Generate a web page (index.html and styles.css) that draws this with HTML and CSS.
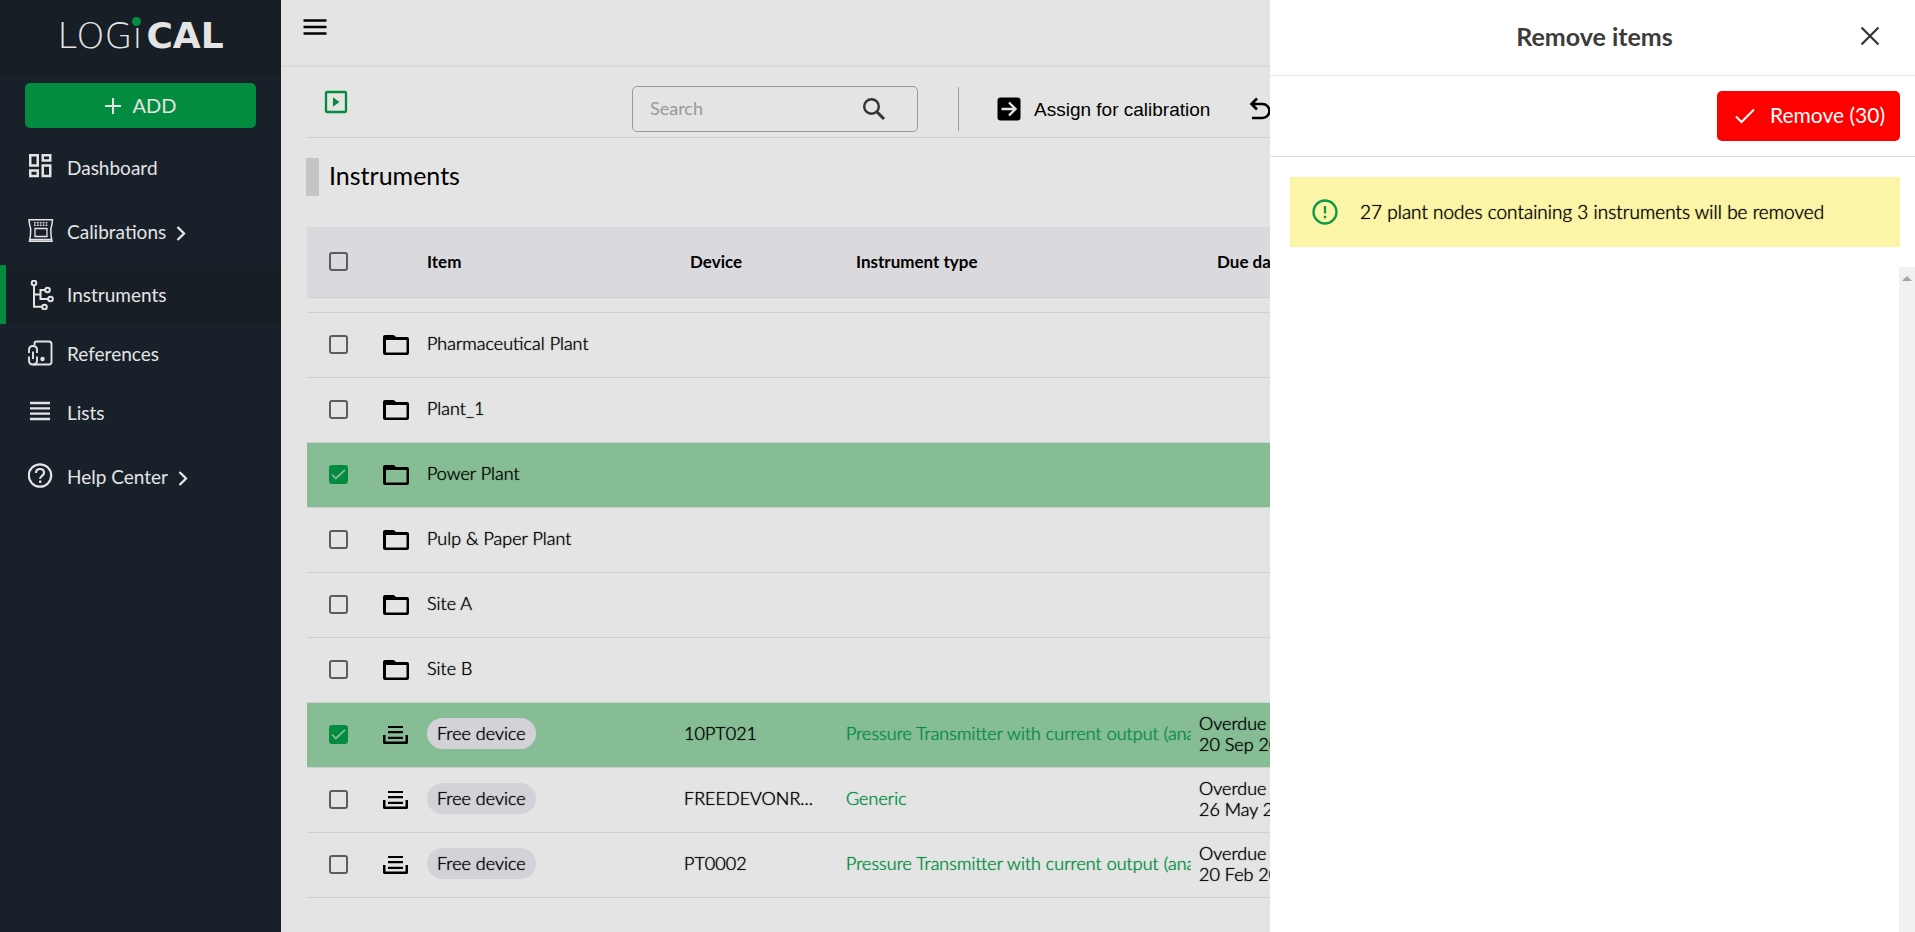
FILE: index.html
```html
<!DOCTYPE html>
<html lang="en">
<head>
<meta charset="utf-8">
<title>LOGiCAL – Instruments</title>
<link rel="stylesheet" href="styles.css">
</head>
<body>
<svg class="sprite" aria-hidden="true">
  <symbol id="folder" viewBox="0 0 26 20">
    <path fill="#000" fill-rule="evenodd" d="M2 0H10Q11 0 12 1L13 2H24Q26 2 26 4V18Q26 20 24 20H2Q0 20 0 18V2Q0 0 2 0ZM3 5V17.500H23.500V5Z"/>
  </symbol>
  <symbol id="device" viewBox="0 0 26 18">
    <path fill="#000" d="M5 0H20V2H5ZM5 5H20V7.300H5ZM5 10.700H20V13H5ZM0 9H2.500V15.500H22.500V9H25V16.500Q25 18 23.500 18H1.500Q0 18 0 16.500Z"/>
  </symbol>
</svg>
<div class="app">
  <aside class="sidebar">
    <div class="brand"><span class="brand-thin">LOG<span class="brand-i">ı</span></span><span class="brand-bold">CAL</span></div>
    <button class="add" type="button">
      <svg width="16" height="16" viewBox="0 0 16 16"><path d="M8 0V16M0 8H16" stroke="currentColor" stroke-width="2"/></svg>
      ADD
    </button>
    <nav class="nav">
      <a class="nav-item" href="#">
        <svg width="26" height="30" viewBox="0 0 26 30" fill="none" stroke="currentColor" stroke-width="2.500"><path d="M2.250 2.250H9.750V12.500H2.250ZM14.750 2.250H22.250V7.500H14.750ZM2.250 17.500H9.750V23H2.250ZM14.750 12.500H22.250V23H14.750Z"/></svg>
        Dashboard
      </a>
      <a class="nav-item expandable" href="#">
        <svg width="26" height="30" viewBox="0 0 26 30" fill="none" stroke="currentColor"><path stroke-width="1.500" d="M1 2.800H24.500L24 7Q22 12 23 18L24 24.300H1.500L2.500 18Q3.500 12 1.500 7ZM2 22.500H23.500"/><path stroke-width="1.300" d="M7 11.500H19V19.500H7Z"/><path stroke-width="1.500" stroke-dasharray="1.700 1.200" d="M6 5.700H19.500M6 8.200H19.500"/></svg>
        Calibrations
        <svg class="chev" width="10" height="15" viewBox="0 0 10 15" fill="none" stroke="currentColor" stroke-width="2.300"><path d="M1.500 1L8 7.500 1.500 14"/></svg>
      </a>
      <a class="nav-item active" href="#">
        <svg width="26" height="30" viewBox="0 0 26 30" fill="none" stroke="currentColor" stroke-width="2"><circle cx="6" cy="3" r="2.300"/><circle cx="19.500" cy="10" r="2.300"/><circle cx="22.500" cy="19" r="2.300"/><circle cx="16.500" cy="27" r="2.300"/><path d="M6 5.500V26.800H14M6 14.500H12.500M17 10H12.500V19H20"/></svg>
        Instruments
      </a>
      <a class="nav-item" href="#">
        <svg width="26" height="30" viewBox="0 0 26 30" fill="none" stroke="currentColor" stroke-width="1.900"><path d="M6.500 6V4.500Q6.500 2.500 8.500 2.500H21Q23.500 2.500 23.500 5V23Q23.500 25.500 21 25.500H5"/><path d="M1 14V11Q1 7 5 7T9 11V14M1 17.500V21.500Q1 25.500 5 25.500T9 21.500V17.500M5 12.500V20"/><circle cx="14.500" cy="20" r="2.200" fill="currentColor" stroke="none"/></svg>
        References
      </a>
      <a class="nav-item" href="#">
        <svg width="26" height="30" viewBox="0 0 26 30" fill="none" stroke="currentColor" stroke-width="2.300"><path d="M2 5H22M2 10.300H22M2 15.600H22M2 21H22"/></svg>
        Lists
      </a>
      <a class="nav-item expandable" href="#">
        <svg width="26" height="30" viewBox="0 0 26 30" fill="none" stroke="currentColor" stroke-width="2.200"><circle cx="12" cy="13.500" r="11.200"/><path d="M8 11Q8 7 12 7T16 10.700Q16 12.300 14 13.800T12.200 16.800M12.200 18.600V21"/></svg>
        Help Center
        <svg class="chev" width="10" height="15" viewBox="0 0 10 15" fill="none" stroke="currentColor" stroke-width="2.300"><path d="M1.500 1L8 7.500 1.500 14"/></svg>
      </a>
    </nav>
  </aside>

  <main class="main">
    <header class="topbar">
      <button class="icon-btn" type="button" aria-label="Toggle menu">
        <svg width="24" height="16" viewBox="0 0 24 16"><path d="M.5 1.500H23.500M.5 8H23.500M.5 14.500H23.500" stroke="#000" stroke-width="2.600"/></svg>
      </button>
    </header>
    <div class="content">
      <div class="toolbar">
        <button class="icon-btn play" type="button" aria-label="Expand tree">
          <svg width="24" height="24" viewBox="0 0 24 24"><rect x="2" y="2" width="20" height="20" rx="1" fill="none" stroke="#038c40" stroke-width="2.300"/><path d="M9 7.200L15.500 12 9 16.800Z" fill="#038c40"/></svg>
        </button>
        <div class="search">
          <input type="text" placeholder="Search" aria-label="Search">
          <svg width="24" height="24" viewBox="0 0 24 24" fill="none" stroke="#333"><circle cx="9.500" cy="9.500" r="7.300" stroke-width="2.400"/><path d="M14.500 14.500L22 22" stroke-width="3"/></svg>
        </div>
        <div class="actions">
          <button class="action" type="button">
            <svg width="24" height="24" viewBox="0 0 24 24"><rect x=".5" y=".5" width="23" height="23" rx="3"/><path d="M4.500 12H18M12 5.500L18.500 12 12 18.500" fill="none" stroke="#e4e4e4" stroke-width="2.400"/></svg>
            Assign for calibration
          </button>
          <button class="action" type="button" aria-label="Undo">
            <svg width="24" height="24" viewBox="0 0 24 24" fill="none" stroke="#000" stroke-width="2.600"><path d="M8 1.500L2.500 7 8 12.500M2.500 7H13.500A7 7 0 0 1 13.500 21H3"/></svg>
          </button>
        </div>
      </div>
      <h1 class="title">Instruments</h1>
      <table class="grid">
        <colgroup><col class="c-check"><col class="c-icon"><col class="c-item"><col class="c-device"><col class="c-type"><col class="c-due"></colgroup>
        <thead>
          <tr><th><input type="checkbox" aria-label="Select all"></th><th></th><th>Item</th><th>Device</th><th>Instrument type</th><th>Due date</th></tr>
        </thead>
        <tbody>
          <tr class="peek"><td colspan="6"></td></tr>
          <tr><td><input type="checkbox" aria-label="Select Pharmaceutical Plant"></td><td><svg class="folder"><use href="#folder"/></svg></td><td>Pharmaceutical Plant</td><td></td><td></td><td></td></tr>
          <tr><td><input type="checkbox" aria-label="Select Plant_1"></td><td><svg class="folder"><use href="#folder"/></svg></td><td>Plant_1</td><td></td><td></td><td></td></tr>
          <tr class="selected"><td><input type="checkbox" checked aria-label="Select Power Plant"></td><td><svg class="folder"><use href="#folder"/></svg></td><td>Power Plant</td><td></td><td></td><td></td></tr>
          <tr><td><input type="checkbox" aria-label="Select Pulp &amp; Paper Plant"></td><td><svg class="folder"><use href="#folder"/></svg></td><td>Pulp &amp; Paper Plant</td><td></td><td></td><td></td></tr>
          <tr><td><input type="checkbox" aria-label="Select Site A"></td><td><svg class="folder"><use href="#folder"/></svg></td><td>Site A</td><td></td><td></td><td></td></tr>
          <tr><td><input type="checkbox" aria-label="Select Site B"></td><td><svg class="folder"><use href="#folder"/></svg></td><td>Site B</td><td></td><td></td><td></td></tr>
          <tr class="selected"><td><input type="checkbox" checked aria-label="Select 10PT021"></td><td><svg class="device"><use href="#device"/></svg></td><td><span class="pill">Free device</span></td><td>10PT021</td><td class="type"><div>Pressure Transmitter with current output (analog)</div></td><td>Overdue<br>20 Sep 2023</td></tr>
          <tr><td><input type="checkbox" aria-label="Select FREEDEVONR"></td><td><svg class="device"><use href="#device"/></svg></td><td><span class="pill">Free device</span></td><td>FREEDEVONR...</td><td class="type"><div>Generic</div></td><td>Overdue<br>26 May 2023</td></tr>
          <tr><td><input type="checkbox" aria-label="Select PT0002"></td><td><svg class="device"><use href="#device"/></svg></td><td><span class="pill">Free device</span></td><td>PT0002</td><td class="type"><div>Pressure Transmitter with current output (analog)</div></td><td>Overdue<br>20 Feb 2023</td></tr>
        </tbody>
      </table>
    </div>
  </main>
</div>

<section class="drawer" role="dialog" aria-labelledby="drawer-title">
  <header class="drawer-head">
    <h2 id="drawer-title">Remove items</h2>
    <button class="icon-btn" type="button" aria-label="Close">
      <svg width="20" height="20" viewBox="0 0 20 20"><path d="M1.500 1.500L18.500 18.500M18.500 1.500L1.500 18.500" stroke="#333" stroke-width="2.200"/></svg>
    </button>
  </header>
  <div class="drawer-actions">
    <button class="remove" type="button">
      <svg width="20" height="16" viewBox="0 0 20 16"><path d="M1 8.500L6.500 14 19 1.500" fill="none" stroke="#fff" stroke-width="2"/></svg>
      Remove (30)
    </button>
  </div>
  <p class="notice">
    <svg width="26" height="26" viewBox="0 0 26 26" fill="none" stroke="#0b9a48" stroke-width="2.300"><circle cx="13" cy="13" r="11.500"/><path d="M13 7V14.500M13 16.700V19.200"/></svg>
    <span>27 plant nodes containing 3 instruments will be removed</span>
  </p>
  <div class="drawer-body">
    <div class="scroll-track"><span class="scroll-up"></span></div>
  </div>
</section>
</body>
</html>
```
FILE: styles.css
```css
* { box-sizing: border-box; }
body {
  margin: 0;
  font-family: Lato, "Noto Sans", sans-serif;
  font-size: 18px;
  line-height: 21px;
  color: #000;
  background: #e4e4e4;
  overflow: hidden;
}
button, input { font: inherit; color: inherit; }
button { border: 0; background: none; padding: 0; cursor: pointer; }
svg { display: block; flex: none; }
.sprite { position: absolute; width: 0; height: 0; }

.app { display: flex; min-height: 100vh; }

.sidebar { width: 281px; flex: none; background: #18202a; color: #e4e4e4; }
.brand {
  display: flex;
  align-items: center;
  justify-content: center;
  gap: 4px;
  height: 77px;
  padding-bottom: 6px;
  background: #171e25;
  font-family: "DejaVu Sans", sans-serif;
  font-size: 36px;
  line-height: 40px;
}
.brand-thin { font-weight: 200; }
.brand-bold { font-weight: 700; }
.brand-i { position: relative; }
.brand-i::before {
  content: "";
  position: absolute;
  top: 2px;
  left: 0;
  width: 9px;
  height: 9px;
  border-radius: 50%;
  background: #038c40;
}
.add {
  display: flex;
  align-items: center;
  justify-content: center;
  gap: 12px;
  width: calc(100% - 50px);
  height: 45px;
  margin: 6px 25px 10px;
  border-radius: 5px;
  background: #038c40;
  font-size: 20px;
}
.nav-item {
  display: flex;
  align-items: center;
  gap: 13px;
  height: 59px;
  padding-left: 28px;
  color: inherit;
  font-size: 19px;
  text-decoration: none;
}
.nav-item svg { margin-top: 1px; }
.nav-item.expandable { height: 68px; }
.nav-item.active { background: #171e25; border-left: 6px solid #038c40; padding-left: 22px; }
.nav-item .chev { margin-left: -3px; margin-top: 4px; }

.main { flex: 1; min-width: 0; }
.topbar { display: flex; height: 67px; padding: 19px 22px; border-bottom: 2px solid #d8d8de; align-items: flex-start; }
.content { padding: 0 25px; }
.toolbar {
  display: grid;
  grid-template-columns: 326px 286px auto 1fr;
  align-items: center;
  height: 71px;
  padding-top: 14px;
  border-bottom: 1px solid #cfcfd1;
}
.play { justify-self: start; margin: 0 18px 14px; }
.search {
  display: flex;
  align-items: center;
  height: 46px;
  padding: 0 31px 0 17px;
  border: 1px solid #999;
  border-radius: 5px;
}
.search input { flex: 1; min-width: 0; border: 0; padding: 0 0 2px; outline: 0; background: none; }
.search input::placeholder { color: #999; opacity: 1; }
.actions { display: flex; align-items: center; gap: 39px; height: 44px; margin-left: 40px; padding-left: 38px; border-left: 1px solid #999; }
.action { display: flex; align-items: center; gap: 13px; font-family: "Liberation Sans", Arial, sans-serif; font-size: 19px; white-space: nowrap; }

.title {
  margin: 20px 0 31px;
  padding: 0 0 4px 10px;
  border-left: 13px solid #c5c5c5;
  font-size: 25px;
  line-height: 34px;
  font-weight: 400;
}

.grid { width: 100%; table-layout: fixed; border-collapse: collapse; margin-left: 1px; }
.c-check { width: 63px; }
.c-icon { width: 57px; }
.c-item { width: 257px; }
.c-device { width: 162px; }
.c-type { width: 353px; }
.grid th, .grid td { padding: 0; text-align: left; white-space: nowrap; border-bottom: 1px solid #cfcfd4; }
.grid th { height: 70px; background: #d9d9de; font-size: 17px; font-weight: 700; }
.grid th:nth-child(4) { padding-left: 6px; }
.grid th:nth-child(5) { padding-left: 10px; }
.grid th:nth-child(6) { padding-left: 18px; }
.grid td { height: 65px; padding-bottom: 2px; font-weight: 300; text-shadow: 0 0 1px currentColor; }
.grid td:nth-child(-n+2) { padding-bottom: 0; }
.grid .peek td { height: 15px; padding: 0; }
.grid .selected td { background: #87bd95; }
.grid .type div { width: 345px; overflow: hidden; color: #038c40; }
.grid input {
  appearance: none;
  display: block;
  width: 19px;
  height: 19px;
  margin: 0 0 0 22px;
  border: 2px solid #5c5c5c;
  border-radius: 3px;
}
.grid input:checked {
  border-color: #038c40;
  background: #038c40 url("data:image/svg+xml,%3Csvg xmlns='http://www.w3.org/2000/svg' viewBox='0 0 15 15'%3E%3Cpath d='M1 7.500L4.800 11.500 14 2.800' fill='none' stroke='%2387bd95' stroke-width='1.800'/%3E%3C/svg%3E") center / 15px no-repeat;
}
.folder { width: 26px; height: 20px; margin: 1px 0 0 13px; }
.device { width: 26px; height: 18px; margin: 1px 0 0 13px; }
.pill { display: inline-block; padding: 0 10px; line-height: 31px; border-radius: 16px; background: #d2d2d8; }

.drawer {
  position: fixed;
  inset: 0 0 0 auto;
  width: 645px;
  max-width: 100vw;
  display: flex;
  flex-direction: column;
  background: #fff;
}
.drawer-head {
  display: grid;
  grid-template-columns: 44px 1fr 40px;
  align-items: center;
  height: 76px;
  padding: 0 25px 3px;
  border-bottom: 1px solid #e6e6e6;
}
.drawer-head h2 { grid-column: 2; margin: 0; font-size: 25px; line-height: 29px; font-weight: 700; text-align: center; color: #3c3c3c; }
.drawer-head .icon-btn { justify-self: center; }
.drawer-actions { display: flex; justify-content: flex-end; padding: 15px; border-bottom: 1px solid #dedede; }
.remove {
  display: flex;
  align-items: center;
  gap: 15px;
  height: 50px;
  padding: 0 15px 4px 18px;
  border-radius: 5px;
  background: #f00;
  color: #fff;
  font-size: 21px;
}
.remove svg { margin-top: 4px; }
.notice {
  display: flex;
  align-items: center;
  gap: 22px;
  height: 70px;
  margin: 20px 15px 20px 20px;
  padding-left: 22px;
  background: #fcf5a8;
  font-size: 19px;
  font-weight: 300;
}
.notice span { padding-bottom: 2px; text-shadow: 0 0 1px currentColor; }
.drawer-body { flex: 1; display: flex; justify-content: flex-end; }
.scroll-track { width: 16px; background: #f1f1f1; display: flex; justify-content: center; padding-top: 9px; }
.scroll-up { width: 0; height: 0; border: 5px solid transparent; border-top: 0; border-bottom-color: #a3a3a3; }
```
